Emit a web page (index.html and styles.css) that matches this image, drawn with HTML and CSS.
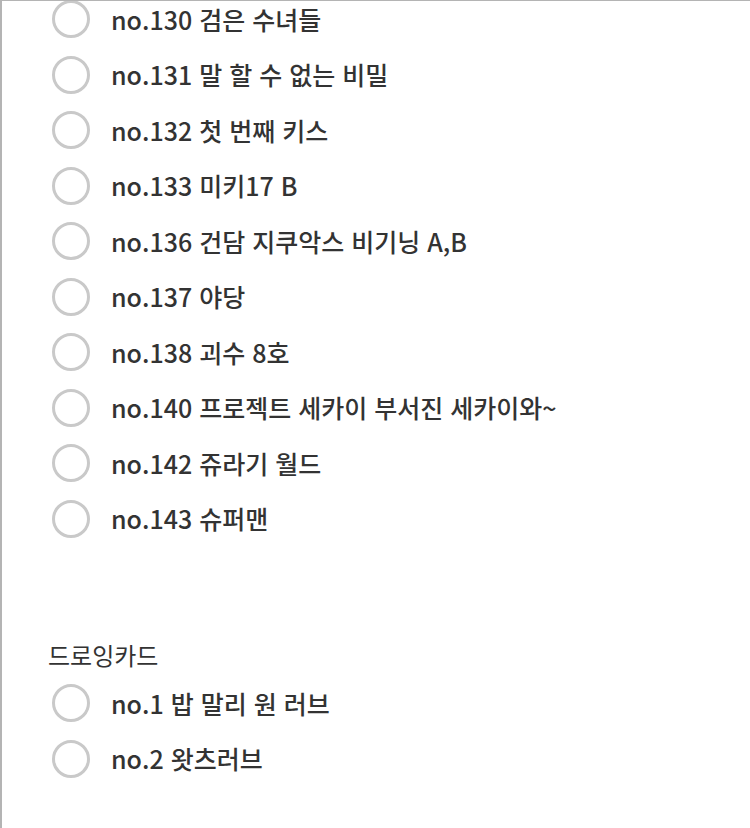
FILE: index.html
```html
<!DOCTYPE html>
<html lang="ko">
<head>
<meta charset="utf-8">
<link rel="stylesheet" href="styles.css">
</head>
<body>
<div class="page">
  <ul class="list first">
    <li class="row"><span class="radio"></span><span class="label">no.130 검은 수녀들</span></li>
    <li class="row"><span class="radio"></span><span class="label">no.131 말 할 수 없는 비밀</span></li>
    <li class="row"><span class="radio"></span><span class="label">no.132 첫 번째 키스</span></li>
    <li class="row"><span class="radio"></span><span class="label">no.133 미키17 B</span></li>
    <li class="row"><span class="radio"></span><span class="label">no.136 건담 지쿠악스 비기닝 A,B</span></li>
    <li class="row"><span class="radio"></span><span class="label">no.137 야당</span></li>
    <li class="row"><span class="radio"></span><span class="label">no.138 괴수 8호</span></li>
    <li class="row"><span class="radio"></span><span class="label">no.140 프로젝트 세카이 부서진 세카이와~</span></li>
    <li class="row"><span class="radio"></span><span class="label">no.142 쥬라기 월드</span></li>
    <li class="row"><span class="radio"></span><span class="label">no.143 슈퍼맨</span></li>
  </ul>
  <div class="section-title">드로잉카드</div>
  <ul class="list second">
    <li class="row"><span class="radio"></span><span class="label">no.1 밥 말리 원 러브</span></li>
    <li class="row"><span class="radio"></span><span class="label">no.2 왓츠러브</span></li>
  </ul>
</div>
</body>
</html>
```
FILE: styles.css
```css
html, body {
  margin: 0;
  padding: 0;
  background: #fff;
}
body {
  width: 750px;
  height: 828px;
  overflow: hidden;
  font-family: "Noto Sans CJK KR", "Noto Sans", sans-serif;
  color: #333;
}
.page {
  box-sizing: border-box;
  height: 828px;
  border-top: 1px solid #b4b4b4;
  border-left: 2px solid #b4b4b4;
  overflow: hidden;
}
.list {
  list-style: none;
  margin: 0;
  padding: 0;
}
.list.first {
  margin-top: -9.75px;
}
.list.second {
  margin-top: 3px;
}
.row {
  display: flex;
  align-items: center;
  height: 55.5px;
  padding-left: 50px;
}
.radio {
  box-sizing: border-box;
  width: 38px;
  height: 38px;
  border: 3px solid #c9c9c9;
  border-radius: 50%;
  flex: none;
}
.label {
  margin-left: 21px;
  font-size: 25px;
  font-weight: 500;
  line-height: 1;
  color: #333;
}
.section-title {
  margin-top: 90px;
  height: 36px;
  display: flex;
  align-items: center;
  padding-left: 46px;
  font-size: 24px;
  font-weight: 400;
  color: #333;
}
```
